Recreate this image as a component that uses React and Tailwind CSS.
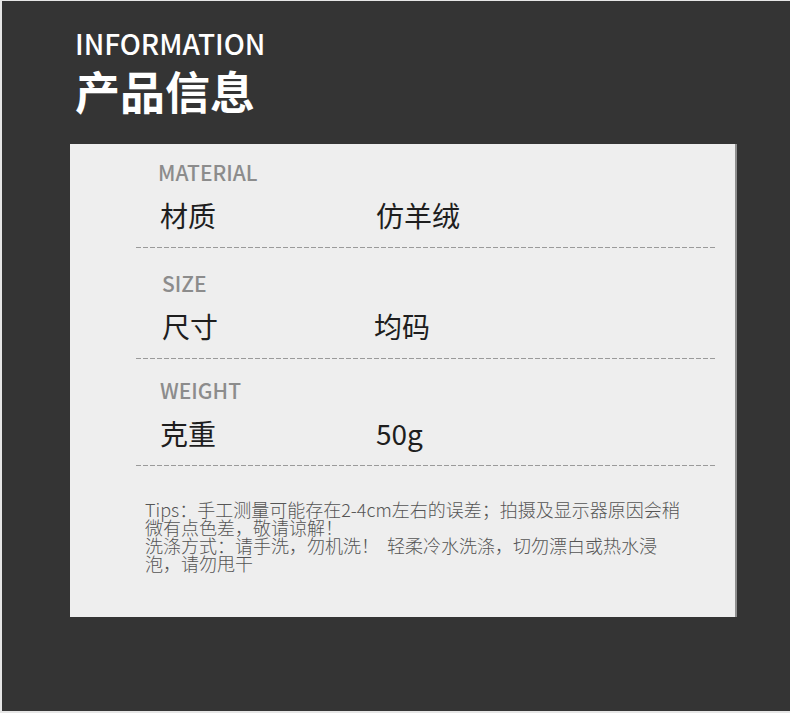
const FONT = "font-['Noto_Sans_CJK_SC','Noto_Sans',sans-serif]";

const ROWS = [
  { en: "MATERIAL", name: "材质", value: "仿羊绒", pad: "pl-[22px]", namePad: "pl-[24px]", top: "pt-0", valueW: "w-[216px]" },
  { en: "SIZE", name: "尺寸", value: "均码", pad: "pl-[26px]", namePad: "pl-[26px]", top: "pt-[23px]", valueW: "w-[212px]" },
  { en: "WEIGHT", name: "克重", value: "50g", pad: "pl-[24px]", namePad: "pl-[24px]", top: "pt-[19px]", valueW: "w-[216px]" },
];

function Dashed() {
  return (
    <div className="h-px w-[580px] bg-[repeating-linear-gradient(90deg,#9a9a9a_0_5px,transparent_5px_7px)]" />
  );
}

export default function App() {
  return (
    <div className={`w-[790px] h-[713px] bg-[#e6e6e6] pl-[2px] pt-[1px] ${FONT}`}>
      <div className="w-[788px] h-[710px] bg-[#343434] pt-[24px]">
        <div className="pl-[73px] text-white">
          <div className="text-[28px] leading-[36px] font-medium">INFORMATION</div>
          <div className="mt-[5px] text-[45px] leading-[50px] font-bold">产品信息</div>
        </div>

        <div className="ml-[68px] mt-[28px] w-[667px] h-[473px] bg-[#eeeeee] border-r-2 border-[#8e8e8e] pt-[16px] pl-[66px]">
          {ROWS.map((row) => (
            <div key={row.en} className={row.top}>
              <div className={`${row.pad} text-[21px] leading-[24px] font-medium text-[#8c8c8c]`}>{row.en}</div>
              <div className={`mt-[15px] ${row.namePad} flex text-[28px] leading-[32px] text-[#1e1e1e]`}>
                <span className={row.valueW}>{row.name}</span>
                <span>{row.value}</span>
              </div>
              <div className="mt-[16px]">
                <Dashed />
              </div>
            </div>
          ))}

          <div className="mt-[34px] pl-[9px] text-[18px] leading-[18px] font-light text-[#555555] whitespace-nowrap">
            <div>Tips：手工测量可能存在2-4cm左右的误差；拍摄及显示器原因会稍</div>
            <div>微有点色差，敬请谅解！</div>
            <div>洗涤方式：请手洗，勿机洗！ &nbsp;轻柔冷水洗涤，切勿漂白或热水浸</div>
            <div>泡，请勿甩干</div>
          </div>
        </div>
      </div>
    </div>
  );
}
